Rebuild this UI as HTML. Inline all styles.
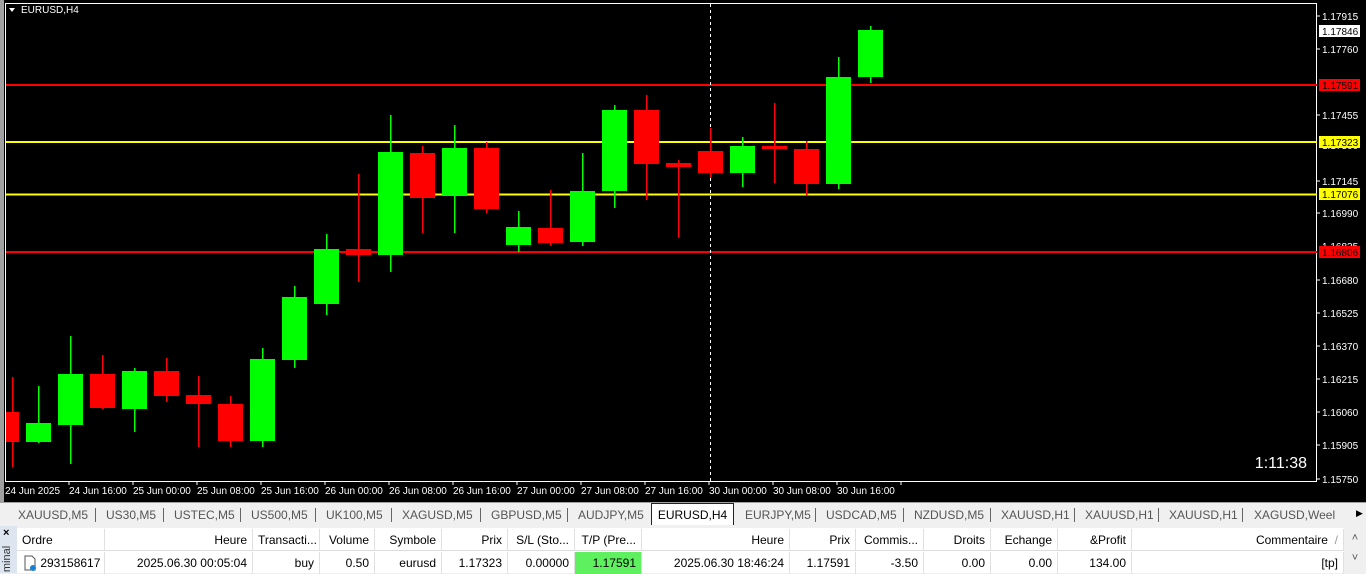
<!DOCTYPE html>
<html><head><meta charset="utf-8"><style>
body{margin:0;width:1366px;height:573px;overflow:hidden;background:#f0f0f0;font-family:"Liberation Sans",sans-serif;position:relative}
#chart{position:absolute;left:0;top:0;width:1366px;height:502px;background:#000}
.tabs{position:absolute;left:0;top:502px;width:1366px;height:23px;background:#f0f0f0;border-top:1px solid #a0a0a0;font-size:12px;color:#555}
.tab{position:absolute;top:5px;white-space:nowrap}
.sep{position:absolute;top:5px;width:1px;height:14px;background:#666}
.act{position:absolute;left:651px;top:0;width:83px;height:22px;background:#fff;border:1px solid #222;border-bottom:none;color:#000;text-align:center;line-height:22px;box-sizing:border-box}
.tbl{position:absolute;left:17px;top:528px;width:1327px;height:45px;background:#fff;font-size:12px}
.c{position:absolute;height:22px;line-height:22px;box-sizing:border-box;padding:0 5px;white-space:nowrap;overflow:hidden;border-right:1px solid #e0e0e0}
.h{top:1px;border-bottom:1px solid #ddd;color:#000}
.r{top:24px;text-align:right}
</style></head><body>
<div id="chart">
<svg width="1366" height="502" style="position:absolute;left:0;top:0" font-family="Liberation Sans, sans-serif">
<rect x="0" y="0" width="4" height="502" fill="#a0a0a0"/>
<rect x="5.5" y="3.5" width="1311" height="478" fill="none" stroke="#fff" stroke-width="1"/>
<polygon points="9,8 15,8 12,12" fill="#fff"/>
<text x="21" y="13" fill="#fff" font-size="10">EURUSD,H4</text>
<line x1="6" y1="85" x2="1317" y2="85" stroke="#f00" stroke-width="2"/>
<line x1="6" y1="142" x2="1317" y2="142" stroke="#ff0" stroke-width="2"/>
<line x1="6" y1="194.5" x2="1317" y2="194.5" stroke="#ff0" stroke-width="2"/>
<line x1="6" y1="252" x2="1317" y2="252" stroke="#f00" stroke-width="2"/>
<line x1="710.5" y1="4" x2="710.5" y2="481" stroke="#fff" stroke-dasharray="3,3"/>
<g id="c"></g>
<g fill="#fff" font-size="10">
<text x="1322" y="20">1.17915</text>
<text x="1322" y="53">1.17760</text>
<text x="1322" y="119">1.17455</text>
<text x="1322" y="149">1.17300</text>
<text x="1322" y="185">1.17145</text>
<text x="1322" y="217">1.16990</text>
<text x="1322" y="250">1.16835</text>
<text x="1322" y="284">1.16680</text>
<text x="1322" y="317">1.16525</text>
<text x="1322" y="350">1.16370</text>
<text x="1322" y="383">1.16215</text>
<text x="1322" y="416">1.16060</text>
<text x="1322" y="449">1.15905</text>
<text x="1322" y="483">1.15750</text>
</g>
<g stroke="#fff"><line x1="1317" y1="16" x2="1320" y2="16"/><line x1="1317" y1="49" x2="1320" y2="49"/><line x1="1317" y1="115" x2="1320" y2="115"/><line x1="1317" y1="181" x2="1320" y2="181"/><line x1="1317" y1="213" x2="1320" y2="213"/><line x1="1317" y1="280" x2="1320" y2="280"/><line x1="1317" y1="313" x2="1320" y2="313"/><line x1="1317" y1="346" x2="1320" y2="346"/><line x1="1317" y1="379" x2="1320" y2="379"/><line x1="1317" y1="412" x2="1320" y2="412"/><line x1="1317" y1="445" x2="1320" y2="445"/><line x1="1317" y1="479" x2="1320" y2="479"/></g>
<rect x="1319" y="25" width="41" height="12" fill="#fff"/><text x="1322" y="35" fill="#000" font-size="10">1.17846</text>
<rect x="1319" y="79" width="41" height="12" fill="#f00"/><text x="1322" y="89" fill="#000" font-size="10">1.17591</text>
<rect x="1319" y="136" width="41" height="12" fill="#ff0"/><text x="1322" y="146" fill="#000" font-size="10">1.17323</text>
<rect x="1319" y="188" width="41" height="12" fill="#ff0"/><text x="1322" y="198" fill="#000" font-size="10">1.17076</text>
<rect x="1319" y="246" width="41" height="12" fill="#f00"/><text x="1322" y="256" fill="#000" font-size="10">1.16806</text>
<text x="1307" y="468" fill="#fff" font-size="16" text-anchor="end">1:11:38</text>
<g fill="#fff" font-size="10" id="t"></g>
</svg>
</div>
<div class="tabs" id="tabs"><div class="act">EURUSD,H4</div></div>
<div style="position:absolute;left:0;top:526px;width:17px;height:47px;background:#dde6f0"></div>
<div style="position:absolute;left:3px;top:527px;font-size:11px;font-weight:bold">×</div>
<div style="position:absolute;left:-6px;top:553px;font-size:11px;transform:rotate(-90deg);color:#333">minal</div>
<div class="tbl" id="tbl"></div>
<div style="position:absolute;left:1344px;top:528px;width:22px;height:45px;background:#f0f0f0;font-size:11px;color:#555;text-align:center;line-height:20px">˄<br>˅</div>
<script>
var d=[[12,412,442,377,467,0],[38,423,442,386,443,1],[70,374,425,336,464,1],[102,374,408,355,409,0],[134,371,409,368,432,1],[166,371,396,358,402,0],[198,395,404,376,447,0],[230,404,441,396,447,0],[262,359,441,348,447,1],[294,297,360,286,368,1],[326,249,304,234,315,1],[358,249,255,174,282,0],[390,152,255,115,272,1],[422,153,198,146,233,0],[454,148,196,125,233,1],[486,148,209,142,213,0],[518,227,245,211,252,1],[550,228,243,190,246,0],[582,191,242,153,246,1],[614,110,191,105,208,1],[646,110,164,95,200,0],[678,163,167,160,238,0],[710,151,173,128,178,0],[742,146,173,137,187,1],[774,146,149,103,183,0],[806,149,184,141,196,0],[838,77,184,57,189,1],[870,30,77,26,83,1]];
var s='';d.forEach(function(a,i){var c=a[5]?'#0f0':'#f00';var x0=i==0?6:a[0]-12,w=i==0?13:25;s+='<rect x="'+a[0]+'" y="'+a[3]+'" width="1.5" height="'+(a[4]-a[3])+'" fill="'+c+'"/><rect x="'+x0+'" y="'+a[1]+'" width="'+w+'" height="'+(a[2]-a[1])+'" fill="'+c+'"/>';});
document.getElementById('c').innerHTML=s;
var tl=['24 Jun 2025','24 Jun 16:00','25 Jun 00:00','25 Jun 08:00','25 Jun 16:00','26 Jun 00:00','26 Jun 08:00','26 Jun 16:00','27 Jun 00:00','27 Jun 08:00','27 Jun 16:00','30 Jun 00:00','30 Jun 08:00','30 Jun 16:00'];
var t='';tl.forEach(function(l,i){var x=5+i*64;t+='<text x="'+x+'" y="494">'+l+'</text><line x1="'+(x+64-(i?0:0))+'" y1="481" x2="'+(x+64)+'" y2="485" stroke="#fff"/>';});
document.getElementById('t').innerHTML=t;
var tabs=[['XAUUSD,M5',18],['US30,M5',106],['USTEC,M5',174],['US500,M5',251],['UK100,M5',326],['XAGUSD,M5',402],['GBPUSD,M5',491],['AUDJPY,M5',578],['EURJPY,M5',745],['USDCAD,M5',826],['NZDUSD,M5',914],['XAUUSD,H1',1001],['XAUUSD,H1',1085],['XAUUSD,H1',1169],['XAGUSD,Weel',1254]];
var h='';tabs.forEach(function(a){h+='<div class="tab" style="left:'+a[1]+'px">'+a[0]+'</div>';});
[95,163,240,315,391,480,567,815,903,990,1074,1158,1242].forEach(function(x){h+='<div class="sep" style="left:'+x+'px"></div>';});
h+='<div class="tab" style="left:1356px;color:#000;font-size:9px">▶</div>';
document.getElementById('tabs').innerHTML+=h;
var cols=[[0,88,'Ordre','293158617','l'],[88,148,'Heure','2025.06.30 00:05:04'],[236,67,'Transacti...','buy'],[303,55,'Volume','0.50'],[358,67,'Symbole','eurusd'],[425,66,'Prix','1.17323'],[491,67,'S/L (Sto...','0.00000'],[558,67,'T/P (Pre...','1.17591','g'],[625,148,'Heure','2025.06.30 18:46:24'],[773,66,'Prix','1.17591'],[839,68,'Commis...','-3.50'],[907,67,'Droits','0.00'],[974,67,'Echange','0.00'],[1041,74,'&Profit','134.00'],[1115,212,'Commentaire &nbsp;<span style="color:#999">/</span>','[tp]']];
var tb='';cols.forEach(function(c){var al=c[4]=='l'?'left':'right';tb+='<div class="c h" style="left:'+c[0]+'px;width:'+c[1]+'px;text-align:'+al+'">'+c[2]+'</div>';var st='left:'+c[0]+'px;width:'+c[1]+'px;';if(c[4]=='g')st+='background:#5ef05e;';if(c[4]=='l')tb+='<div class="c r" style="'+st+'text-align:left;padding-left:6px"><svg width="14" height="16" style="vertical-align:-4px"><path d="M2 1h7l3 3v11H2z" fill="#fff" stroke="#555"/><circle cx="10" cy="13" r="3" fill="#1a7fd0"/></svg> '+c[3]+'</div>';else tb+='<div class="c r" style="'+st+'">'+c[3]+'</div>';});
document.getElementById('tbl').innerHTML=tb;
</script>
</body></html>
